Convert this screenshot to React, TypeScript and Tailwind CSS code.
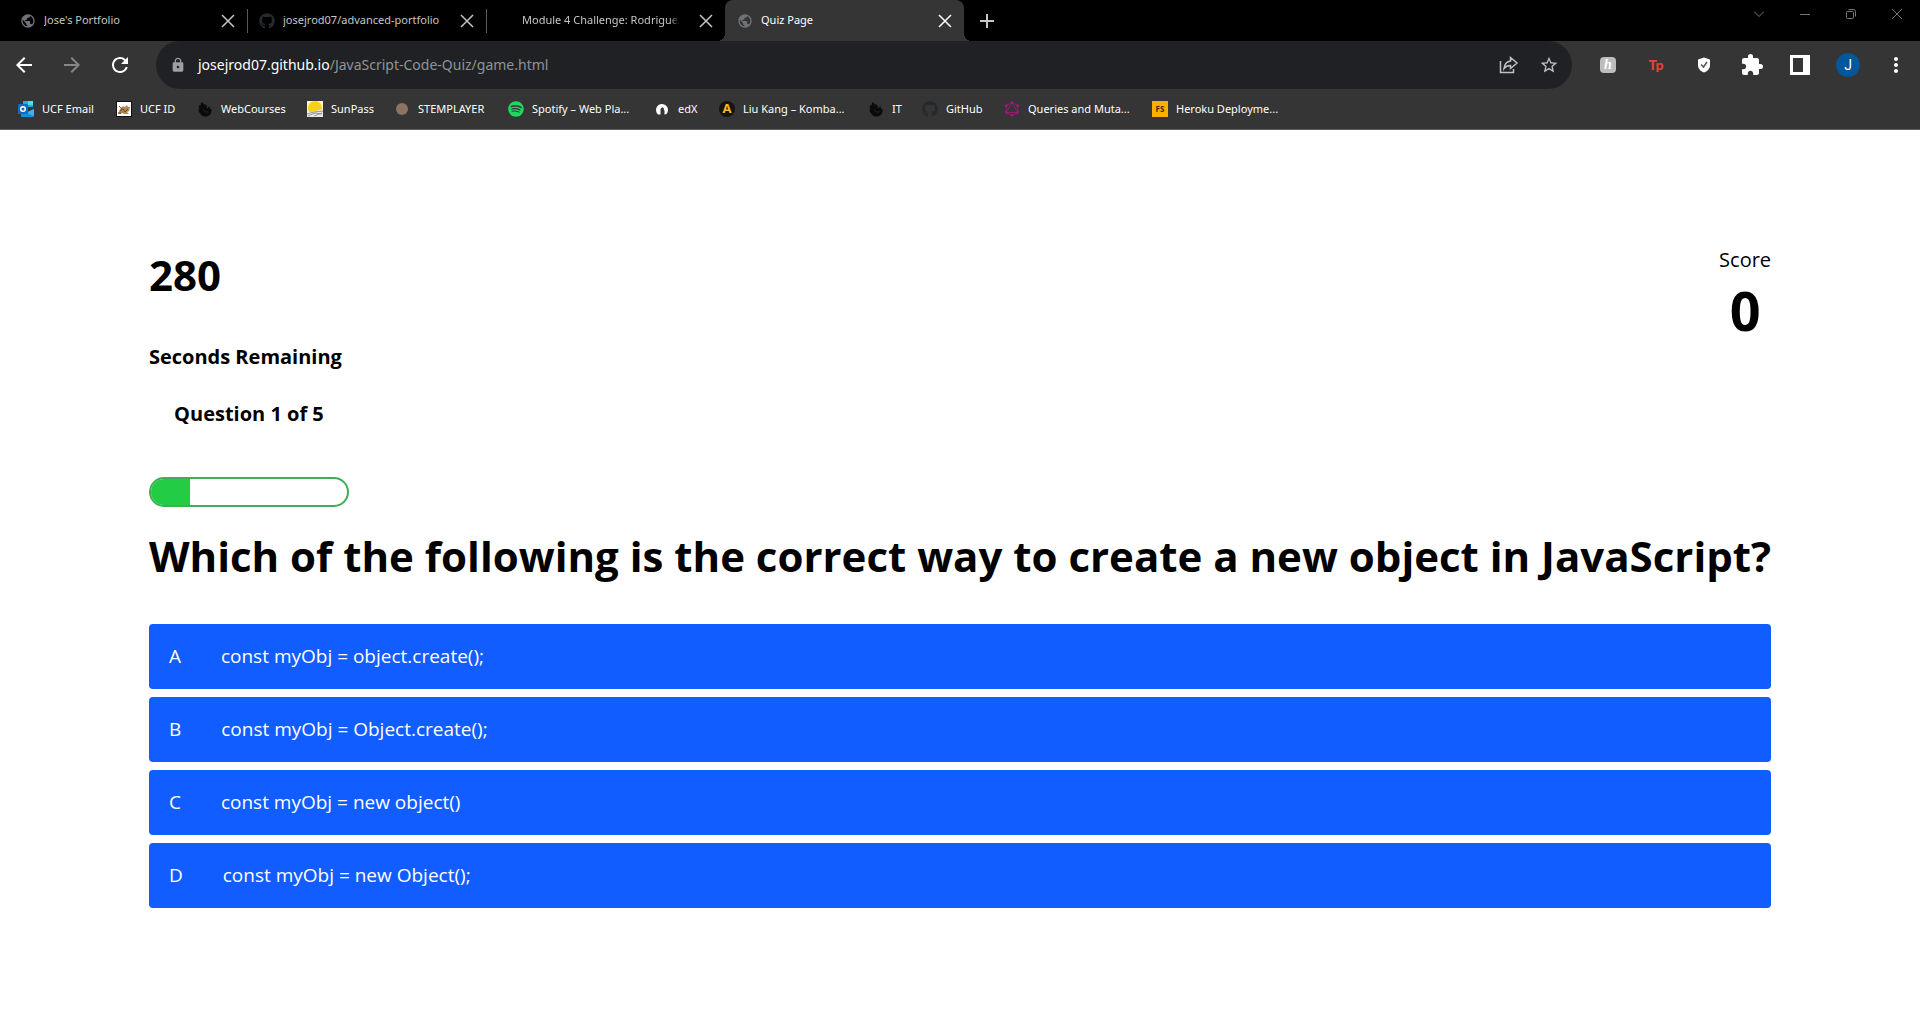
import React from "react";
import {
  MdArrowBack,
  MdArrowForward,
  MdExtension,
  MdLock,
  MdMoreVert,
  MdPublic,
  MdRefresh,
  MdStarBorder,
} from "react-icons/md";
import { FaGithub, FaSpotify } from "react-icons/fa";
import { SiGraphql } from "react-icons/si";

type Tab = { title: string; icon: React.ReactNode; active?: boolean };
type Bookmark = { label: string; width: string; icon: React.ReactNode };

const KnightIcon = () => (
  <svg viewBox="0 0 16 16" className="size-4" aria-hidden="true">
    <path
      d="M5.500 1C3.500 2 3.500 3.500 4 4.500L2.500 4C1.500 6 1.500 7 2.500 8L1.500 8.500c0 2 .5 3 1.500 3.500C4 14.500 6 15.500 8.500 15.500c3.500 0 6-2.500 6-6 0-.8-.1-1.500-.4-2.100l-1.600 1.100c.6-1.200.5-2.400-.2-3.300L10.500 7l-1-.3 1-2.200-2.500.2 1-1.700-2.500.5z"
      fill="#0a0a0a"
    />
    <path d="M6 8.500c1 2 3 3 5.500 2.500" stroke="#333" strokeWidth="0.700" fill="none" />
  </svg>
);

const OutlookIcon = () => (
  <svg viewBox="0 0 16 16" className="size-4" aria-hidden="true">
    <path d="M5 0h10v6H5z" fill="#28a8ea" />
    <path d="M10 0h5v4h-5z" fill="#50d9ff" />
    <path d="M5 4h5v5H5z" fill="#0364b8" />
    <path d="M3 8l6.500 4L16 8v7a1 1 0 0 1-1 1H4a1 1 0 0 1-1-1z" fill="#1490df" />
    <path d="M16 8v7L8 11.500z" fill="#35b8f1" />
    <rect x="0" y="3" width="10" height="10" rx="1" fill="#0f6cbd" />
    <circle cx="5" cy="8" r="2.300" fill="none" stroke="#fff" strokeWidth="1.500" />
  </svg>
);

const UcfIdIcon = () => (
  <svg viewBox="0 0 16 16" className="size-4" aria-hidden="true">
    <rect x="0.500" y="0.500" width="15" height="15" fill="#fff" stroke="#111" />
    <path d="M2 13l2-5 3-3 2 1 2-2 1 2 2 0-1 4-2 1 2 2H8l-2-1-1 1z" fill="#b08a50" />
    <path d="M3 5l3 3M4 10l3-2 2 3 3-3M2 12h3" stroke="#4a3a22" strokeWidth="0.800" fill="none" />
  </svg>
);

const SunPassIcon = () => (
  <svg viewBox="0 0 16 16" className="size-4" aria-hidden="true">
    <path d="M0 0h16v16H0z" fill="#fff7c8" />
    <circle cx="8" cy="7" r="7" fill="#f7cf1d" />
    <path d="M0 12l16-4v8H0z" fill="#e9e9e9" />
    <path d="M0 13l7-2 9-1M1 15l7-3 7 1M7 15l8-3" stroke="#8b8b8b" strokeWidth="0.900" fill="none" />
  </svg>
);

const EdxIcon = () => (
  <svg viewBox="0 0 16 16" className="size-4" aria-hidden="true">
    <path d="M4 13.500A6 6 0 1 1 12.500 13L10.500 13.500V9.500L8.500 6.500 6.500 8v5.500z" fill="#fff" />
    <circle cx="8.500" cy="7.800" r="1.300" fill="#353535" />
  </svg>
);

const bookmarks: Bookmark[] = [
  { label: "UCF Email", width: "w-[98px]", icon: <OutlookIcon /> },
  { label: "UCF ID", width: "w-[81px]", icon: <UcfIdIcon /> },
  { label: "WebCourses", width: "w-[110px]", icon: <KnightIcon /> },
  { label: "SunPass", width: "w-[87px]", icon: <SunPassIcon /> },
  {
    label: "STEMPLAYER",
    width: "w-[114px]",
    icon: <span className="m-0.5 size-3 rounded-full bg-[#8c7464]" />,
  },
  {
    label: "Spotify – Web Pla...",
    width: "w-[146px]",
    icon: <FaSpotify className="size-4 text-[#1ed760]" />,
  },
  { label: "edX", width: "w-[65px]", icon: <EdxIcon /> },
  {
    label: "Liu Kang – Komba...",
    width: "w-[149px]",
    icon: (
      <span className="flex size-4 items-center justify-center rounded-full bg-[#17130f] text-[13px] font-bold text-[#f5b526]">
        A
      </span>
    ),
  },
  { label: "IT", width: "w-[54px]", icon: <KnightIcon /> },
  {
    label: "GitHub",
    width: "w-[82px]",
    icon: <FaGithub className="size-4 text-[#24292e]" />,
  },
  {
    label: "Queries and Muta...",
    width: "w-[148px]",
    icon: <SiGraphql className="size-4 text-[#a6167f]" />,
  },
  {
    label: "Heroku Deployme...",
    width: "w-[148px]",
    icon: (
      <span className="flex size-4 items-center justify-center bg-[#ffae00] text-[8px] font-bold text-[#3a2a00]">
        FS
      </span>
    ),
  },
];

const tabs: Tab[] = [
  { title: "Jose's Portfolio", icon: <MdPublic className="size-4 text-[#6f7276]" /> },
  { title: "josejrod07/advanced-portfolio", icon: <FaGithub className="size-4 text-[#24292e]" /> },
  { title: "Module 4 Challenge: Rodriguez", icon: <span className="size-4" /> },
  { title: "Quiz Page", icon: <MdPublic className="size-4 text-[#6f7276]" />, active: true },
];

const CloseIcon = () => (
  <svg viewBox="0 0 14 14" className="size-3.5" aria-hidden="true">
    <path d="M1 1l12 12M13 1L1 13" stroke="currentColor" strokeWidth="1.500" fill="none" />
  </svg>
);

function TabStrip() {
  return (
    <header className="flex h-[41px] items-stretch bg-black pl-2">
      {tabs.map((tab, i) => (
        <div
          key={tab.title}
          className={
            tab.active
              ? "relative flex w-[239px] items-center rounded-t-lg bg-[#353535] pr-3 pl-3 text-white"
              : "relative flex w-[239px] items-center pr-3 pl-3 text-[#c4c7c5]"
          }
        >
          <button className="flex min-w-0 flex-1 items-center gap-2">
            {tab.icon}
            <span
              className={
                i === 2
                  ? "min-w-0 flex-1 overflow-hidden text-left whitespace-nowrap [mask-image:linear-gradient(to_right,black_94%,transparent)]"
                  : "min-w-0 flex-1 overflow-hidden text-left whitespace-nowrap"
              }
            >
              {tab.title}
            </span>
          </button>
          <button aria-label={`Close ${tab.title}`} className="ml-5">
            <CloseIcon />
          </button>
          {i < 2 && <span className="absolute top-[9px] -right-px h-6 w-px bg-[#5a5a5a]" />}
          {tab.active && (
            <>
              <span className="absolute bottom-0 -left-2 size-2 bg-[radial-gradient(circle_at_0_0,transparent_8px,#353535_8px)]" />
              <span className="absolute -right-2 bottom-0 size-2 bg-[radial-gradient(circle_at_100%_0,transparent_8px,#353535_8px)]" />
            </>
          )}
        </div>
      ))}
      <button aria-label="New tab" className="ml-4 self-center text-[#c4c7c5]">
        <svg viewBox="0 0 14 14" className="size-3.5">
          <path d="M7 0v14M0 7h14" stroke="currentColor" strokeWidth="2" />
        </svg>
      </button>
      <div className="ml-auto flex h-7 items-center text-[#777]">
        <button aria-label="Search tabs" className="flex w-[46px] justify-center">
          <svg viewBox="0 0 10 10" className="size-2.5">
            <path d="M0 2.500l5 5 5-5" stroke="currentColor" fill="none" />
          </svg>
        </button>
        <button aria-label="Minimize" className="flex w-[46px] justify-center">
          <svg viewBox="0 0 10 10" className="size-2.5">
            <path d="M0 5.500h10" stroke="currentColor" fill="none" />
          </svg>
        </button>
        <button aria-label="Restore" className="flex w-[46px] justify-center">
          <svg viewBox="0 0 10 10" className="size-2.5">
            <rect x="0.500" y="2.500" width="7" height="7" rx="1" stroke="currentColor" fill="none" />
            <path d="M2.500 0.500h5a2 2 0 0 1 2 2v5" stroke="currentColor" fill="none" />
          </svg>
        </button>
        <button aria-label="Close window" className="flex w-[46px] justify-center">
          <svg viewBox="0 0 10 10" className="size-2.5">
            <path d="M0 0l10 10M10 0L0 10" stroke="currentColor" fill="none" />
          </svg>
        </button>
      </div>
    </header>
  );
}

function Toolbar() {
  return (
    <nav className="flex h-12 items-center bg-[#353535]" aria-label="Browser toolbar">
      <div className="flex w-[156px] shrink-0">
        <button aria-label="Back" className="flex w-12 justify-center">
          <MdArrowBack className="size-6 text-white" />
        </button>
        <button aria-label="Forward" className="flex w-12 justify-center">
          <MdArrowForward className="size-6 text-[#868686]" />
        </button>
        <button aria-label="Reload" className="flex w-12 justify-center">
          <MdRefresh className="size-6 text-white" />
        </button>
      </div>
      <div className="flex h-12 flex-1 items-center rounded-full bg-[#202124] pr-[3px] pl-3.5 text-sm">
        <MdLock className="size-4 shrink-0 text-[#9aa0a6]" />
        <label htmlFor="url" className="ml-3 text-white">
          josejrod07.github.io
        </label>
        <input
          id="url"
          className="min-w-0 flex-1 bg-transparent text-[#8f9398] outline-none"
          defaultValue="/JavaScript-Code-Quiz/game.html"
        />
        <button aria-label="Share" className="flex w-10 justify-center text-[#bdc1c6]">
          <svg viewBox="0 0 20 20" className="size-5">
            <path
              d="M1.500 6v11.500h13V14M11.500 2.500l6.500 5.500-6.500 5.500V10.500C8.500 10.500 6.500 11.500 5 13.500c.5-4 3-7 6.500-7.500z"
              stroke="currentColor"
              strokeWidth="1.500"
              fill="none"
            />
          </svg>
        </button>
        <button aria-label="Bookmark this page" className="flex w-10 justify-center text-[#bdc1c6]">
          <MdStarBorder className="size-5" />
        </button>
      </div>
      <div className="ml-3 flex shrink-0 items-center">
        <button aria-label="Coupons" className="flex w-12 justify-center">
          <span className="flex size-4 items-center justify-center rounded-sm bg-[#bdbdbd] font-['Liberation_Serif',serif] text-sm leading-none font-bold text-white italic">
            h
          </span>
        </button>
        <button
          aria-label="Toucan"
          className="flex w-12 justify-center font-['Lato',sans-serif] text-sm leading-none font-black text-[#e8403a]"
        >
          Tp
        </button>
        <button aria-label="Shield" className="flex w-12 justify-center">
          <svg viewBox="0 0 16 16" className="size-4">
            <path d="M8 0.500l6 2V8c0 4-3 6.500-6 7.500C5 14.500 2 12 2 8V2.500z" fill="#fff" />
            <path d="M5 7.500l2.500 2.500L11 5" stroke="#555" strokeWidth="1.500" fill="none" />
          </svg>
        </button>
        <button aria-label="Extensions" className="flex w-12 justify-center">
          <MdExtension className="size-6 text-white" />
        </button>
        <button aria-label="Side panel" className="flex w-12 justify-center">
          <svg viewBox="0 0 20 20" className="size-5">
            <path d="M0 0h20v20H0zM3 3v14h10V3z" fill="#fff" fillRule="evenodd" />
          </svg>
        </button>
        <button aria-label="Profile" className="flex w-12 justify-center">
          <span className="flex size-6 items-center justify-center rounded-full bg-[#01579b] font-['Roboto',sans-serif] text-sm text-white">
            J
          </span>
        </button>
        <button aria-label="Menu" className="flex w-12 justify-center">
          <MdMoreVert className="size-6 text-white" />
        </button>
      </div>
    </nav>
  );
}

function BookmarksBar() {
  return (
    <nav
      className="flex h-[41px] items-center border-b border-[#5c5c5c] bg-[#353535] pl-[18px] text-white"
      aria-label="Bookmarks"
    >
      {bookmarks.map((b) => (
        <a
          key={b.label}
          href="#"
          className={`flex shrink-0 items-center gap-2 whitespace-nowrap ${b.width}`}
        >
          {b.icon}
          <span>{b.label}</span>
        </a>
      ))}
    </nav>
  );
}

const answers = [
  ["A", "const myObj = object.create();"],
  ["B", "const myObj = Object.create();"],
  ["C", "const myObj = new object()"],
  ["D", "const myObj = new Object();"],
];

function Quiz() {
  const question = 1;
  const total = 5;
  return (
    <main className="mx-auto flex w-fit max-w-full flex-col pt-[116px] text-xl leading-[27px] text-black">
      <div className="flex justify-between">
        <section className="w-[200px]">
          <p className="text-[42px] leading-[57px] font-bold">280</p>
          <p className="mt-10 font-bold">Seconds Remaining</p>
          <p id="progress-label" className="mt-[30px] text-center font-bold">
            Question 1 of 5
          </p>
          <div
            role="progressbar"
            aria-labelledby="progress-label"
            aria-valuenow={question}
            aria-valuemax={total}
            className="mt-[50px] h-[30px] overflow-hidden rounded-full border-2 border-[#3fae55]"
          >
            <div className="h-full bg-[#22cc44]" style={{ width: `${(question / total) * 100}%` }} />
          </div>
        </section>
        <section className="text-center">
          <p>Score</p>
          <p className="text-[54px] leading-[74px] font-bold">0</p>
        </section>
      </div>
      <h1 className="mt-5 mb-10 text-[42px] leading-[57px] font-bold">
        Which of the following is the correct way to create a new object in JavaScript?
      </h1>
      <div className="flex flex-col gap-2">
        {answers.map(([letter, text]) => (
          <button
            key={letter}
            className="flex h-[65px] items-center gap-10 rounded bg-[#115dff] px-5 text-left text-[19px] text-white"
          >
            <span>{letter}</span>
            <span>{text}</span>
          </button>
        ))}
      </div>
    </main>
  );
}

export default function App() {
  return (
    <div className="min-h-screen bg-white font-['Open_Sans',sans-serif]">
      <div className="font-['Noto_Sans',sans-serif] text-[11px]">
        <TabStrip />
        <Toolbar />
        <BookmarksBar />
      </div>
      <Quiz />
    </div>
  );
}
